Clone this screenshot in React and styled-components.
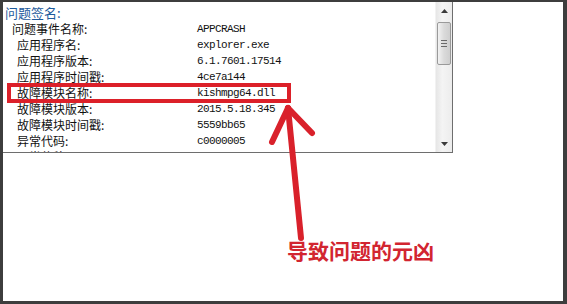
import styled, { createGlobalStyle } from 'styled-components'

const GlobalStyle = createGlobalStyle`
  html, body { margin: 0; padding: 0; background: #fff; }
  * { box-sizing: border-box; }
`

const rows = [
  { label: '问题事件名称:', value: 'APPCRASH', indent: 9 },
  { label: '应用程序名:', value: 'explorer.exe' },
  { label: '应用程序版本:', value: '6.1.7601.17514' },
  { label: '应用程序时间戳:', value: '4ce7a144' },
  { label: '故障模块名称:', value: 'kishmpg64.dll' },
  { label: '故障模块版本:', value: '2015.5.18.345' },
  { label: '故障模块时间戳:', value: '5559bb65' },
  { label: '异常代码:', value: 'c0000005' },
  { label: '异常偏移:', value: '' },
]

function App() {
  return (
    <>
      <GlobalStyle />
      <Frame>
        <Panel>
          <List>
            <Heading>问题签名:</Heading>
            {rows.map((r) => (
              <Row key={r.label}>
                <Label $indent={r.indent ?? 14}>{r.label}</Label>
                <Value>{r.value}</Value>
              </Row>
            ))}
          </List>
          <Scrollbar>
            <ArrowBtn>
              <svg width="7" height="4" viewBox="0 0 7 4"><path d="M0 4 L3.5 0 L7 4 Z" fill="#3a3a3a" /></svg>
            </ArrowBtn>
            <Track>
              <Thumb>
                <Grip />
                <Grip />
                <Grip />
              </Thumb>
            </Track>
            <ArrowBtn>
              <svg width="7" height="4" viewBox="0 0 7 4"><path d="M0 0 L3.5 4 L7 0 Z" fill="#3a3a3a" /></svg>
            </ArrowBtn>
          </Scrollbar>
        </Panel>
        <Caption>导致问题的元凶</Caption>
        <Overlay width="560" height="299" viewBox="0 0 560 299">
          <rect x="6" y="83" width="280" height="16" fill="none" stroke="#dc2029" strokeWidth="4" />
          <g stroke="#d9212b" strokeWidth="6" strokeLinecap="round" fill="none">
            <line x1="285" y1="106" x2="298" y2="236" />
            <line x1="285" y1="106" x2="269" y2="140" />
            <line x1="285" y1="106" x2="309" y2="131" />
          </g>
        </Overlay>
      </Frame>
    </>
  )
}

const Frame = styled.div`
  position: relative;
  width: 567px;
  height: 304px;
  border-style: solid;
  border-color: #3d3d3d;
  border-width: 2px 4px 3px 3px;
  background: #fff;
  overflow: hidden;
`

const Panel = styled.div`
  display: flex;
  width: 450px;
  height: 151px;
  border-right: 1px solid #6e6e6e;
  border-bottom: 1px solid #6e6e6e;
  background: #fff;
`

const List = styled.div`
  flex: 1;
  overflow: hidden;
  padding-top: 2px;
`

const Heading = styled.div`
  height: 17px;
  line-height: 17px;
  padding-left: 2px;
  font-family: "Noto Sans CJK SC", sans-serif;
  font-size: 13px;
  color: #1d5a9c;
`

const Row = styled.div`
  display: grid;
  grid-template-columns: 194px 1fr;
  height: 16px;
  line-height: 16px;
  white-space: nowrap;
`

const Label = styled.span`
  padding-left: ${(p) => p.$indent}px;
  font-family: "Noto Sans CJK SC", sans-serif;
  font-size: 12px;
  color: #111;
`

const Value = styled.span`
  font-family: "Liberation Mono", monospace;
  font-size: 11px;
  letter-spacing: -0.6px;
  color: #111;
`

const Scrollbar = styled.div`
  width: 17px;
  display: flex;
  flex-direction: column;
  background: linear-gradient(to right, #e6e6e6, #f4f4f4 40%, #ececec);
  border-left: 1px solid #f2f2f2;
`

const ArrowBtn = styled.div`
  height: 17px;
  display: flex;
  align-items: center;
  justify-content: center;
`

const Track = styled.div`
  flex: 1;
  padding: 3px 1px 0 1px;
`

const Thumb = styled.div`
  height: 43px;
  border: 1px solid #9a9a9a;
  border-radius: 2px;
  background: linear-gradient(to right, #f2f2f2, #dadada 50%, #cfcfcf);
  display: flex;
  flex-direction: column;
  align-items: center;
  justify-content: center;
  gap: 2px;
`

const Grip = styled.div`
  width: 6px;
  height: 1px;
  background: #6a6a6a;
`

const Caption = styled.div`
  margin: 85px 0 0 284px;
  font-family: "Noto Sans CJK SC", sans-serif;
  font-weight: 700;
  font-size: 21px;
  line-height: 24px;
  color: #d22530;
  white-space: nowrap;
`

const Overlay = styled.svg`
  position: absolute;
  left: 0;
  top: 0;
  pointer-events: none;
`

export default App
